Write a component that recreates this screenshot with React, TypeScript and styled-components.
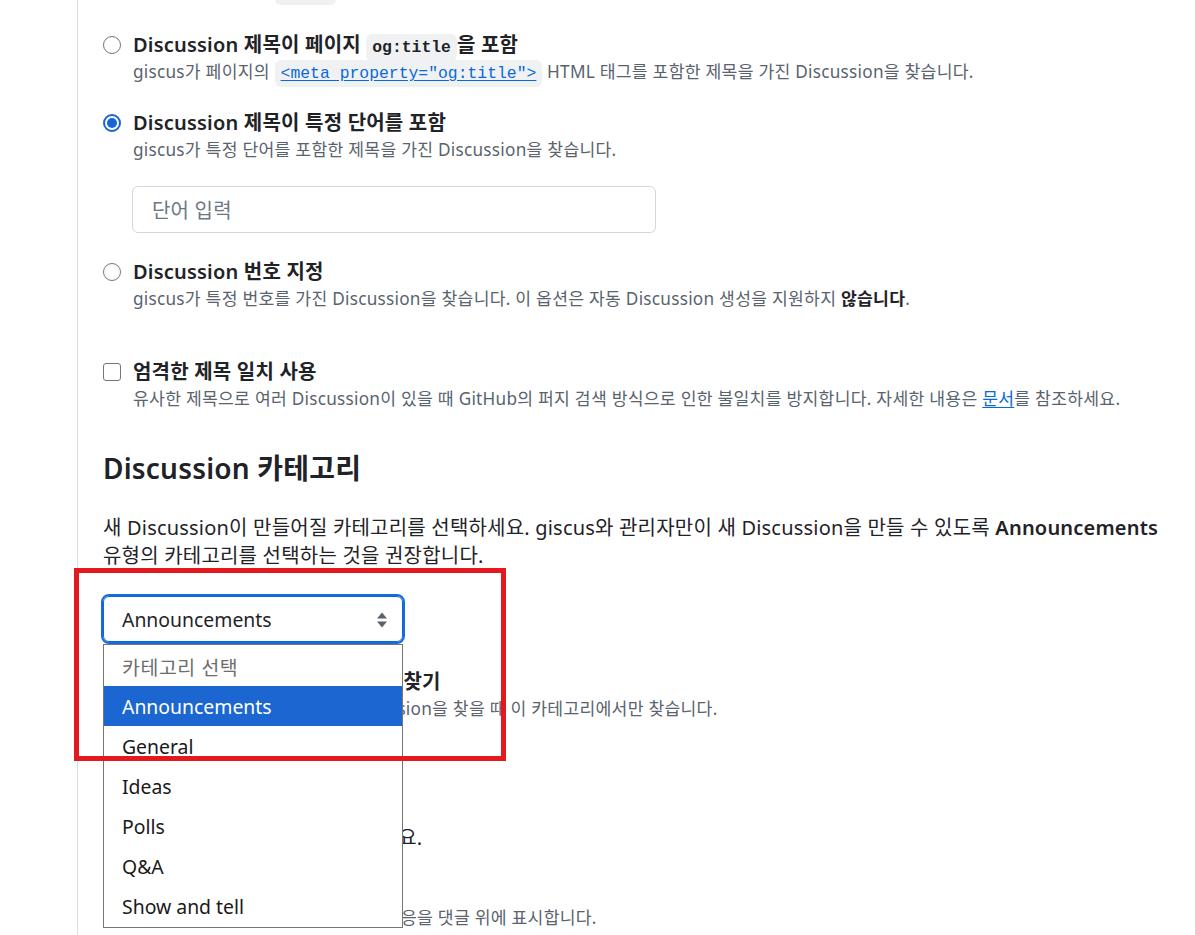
import React from 'react';
import styled, { createGlobalStyle } from 'styled-components';

const GlobalStyle = createGlobalStyle`
  html, body { margin: 0; padding: 0; background: #ffffff; }
  body {
    font-family: "Noto Sans", "Noto Sans CJK KR", sans-serif;
    color: #1f2328;
    overflow: hidden;
  }
`;

const Page = styled.div`
  height: 935px;
  overflow: hidden;
  padding-left: 77px;
`;

const Column = styled.main`
  border-left: 1px solid #d8dee4;
  min-height: 1100px;
  padding-left: 25px;
  margin-top: -50px;
`;

const OptionList = styled.div`
  display: flex;
  flex-direction: column;
  gap: 24px;
`;

const Option = styled.div<{ $mt?: number }>`
  display: grid;
  grid-template-columns: 18px 1fr;
  column-gap: 12px;
  margin-top: ${(p) => p.$mt ?? 0}px;
`;

const Radio = styled.span<{ $checked?: boolean }>`
  box-sizing: border-box;
  width: 18px;
  height: 18px;
  margin-top: 4px;
  border-radius: 50%;
  border: ${(p) => (p.$checked ? '2px solid #1766d6' : '1.5px solid #767676')};
  display: flex;
  align-items: center;
  justify-content: center;
  &::after {
    content: '';
    width: 10px;
    height: 10px;
    border-radius: 50%;
    background: ${(p) => (p.$checked ? '#1766d6' : 'transparent')};
  }
`;

const Checkbox = styled.span`
  box-sizing: border-box;
  width: 18px;
  height: 18px;
  margin-top: 4px;
  border-radius: 3px;
  border: 1.5px solid #767676;
`;

const Body = styled.div`
  display: flex;
  flex-direction: column;
`;

const Title = styled.div`
  font-size: 20px;
  font-weight: 600;
  line-height: 26px;
  letter-spacing: 0.2px;
  color: #1f2328;
  white-space: nowrap;
`;

const Desc = styled.div`
  font-size: 17.2px;
  line-height: 28px;
  letter-spacing: 0.25px;
  color: #59636e;
  white-space: nowrap;
  strong {
    font-weight: 700;
    color: #1f2328;
  }
`;

const Code = styled.code<{ $bold?: boolean }>`
  font-family: "Liberation Mono", "DejaVu Sans Mono", monospace;
  font-size: 16.4px;
  line-height: 1;
  letter-spacing: 0;
  font-weight: ${(p) => (p.$bold ? 700 : 400)};
  background: #eff1f3;
  border-radius: 6px;
  padding: 4px 6px;
  color: #1f2328;
`;

const Link = styled.a`
  color: #0969da;
  text-decoration: underline;
  text-underline-offset: 2px;
`;

const TextInput = styled.div`
  box-sizing: border-box;
  width: 524px;
  height: 47px;
  margin-top: 22px;
  margin-bottom: 2px;
  margin-left: -1px;
  border: 1px solid #d0d7de;
  border-radius: 6px;
  padding-left: 19px;
  display: flex;
  align-items: center;
  font-size: 20px;
  letter-spacing: 0.2px;
  color: #6e7781;
`;

const Heading = styled.h2`
  margin: 38px 0 0;
  font-size: 28px;
  line-height: 34px;
  font-weight: 600;
  letter-spacing: 0.2px;
  color: #1f2328;
`;

const Para = styled.p`
  margin: 29px 0 0;
  font-size: 20px;
  line-height: 28px;
  letter-spacing: 0.2px;
  color: #1f2328;
  white-space: nowrap;
  strong {
    font-weight: 600;
  }
`;

const SelectWrap = styled.div`
  position: relative;
  width: 300px;
  margin-top: 26px;
  margin-bottom: 27px;
  z-index: 2;
`;

const SelectBox = styled.div`
  box-sizing: border-box;
  width: 300px;
  height: 46px;
  border: 1px solid #0969da;
  border-radius: 6px;
  outline: 2px solid #1a6bd8;
  outline-offset: 0;
  padding: 1px 14px 0 18px;
  display: flex;
  align-items: center;
  justify-content: space-between;
  font-size: 19.4px;
  color: #1f2328;
  background: #fff;
`;

const ListBox = styled.ul`
  position: absolute;
  top: calc(100% + 2px);
  left: 0;
  box-sizing: border-box;
  width: 300px;
  margin: 0;
  padding: 1px 0;
  list-style: none;
  border: 1px solid #767676;
  background: #ffffff;
`;

const ListItem = styled.li<{ $active?: boolean; $muted?: boolean }>`
  height: 40px;
  display: flex;
  align-items: center;
  padding-left: 18px;
  padding-top: 1px;
  box-sizing: border-box;
  font-size: 19.4px;
  letter-spacing: ${(p) => (p.$muted ? '0.6px' : '0')};
  background: ${(p) => (p.$active ? '#1b66d1' : 'transparent')};
  color: ${(p) => (p.$active ? '#ffffff' : p.$muted ? '#6d6d6d' : '#1a1a1a')};
`;

const Annotation = styled.div`
  position: absolute;
  left: -29px;
  top: -28px;
  width: 432px;
  height: 193px;
  box-sizing: border-box;
  border: 5px solid #e3191d;
  z-index: 3;
  pointer-events: none;
`;

const SortIcon = () => (
  <svg width="12" height="18" viewBox="0 0 12 18" aria-hidden="true">
    <path d="M1 7.5 L6 1.5 L11 7.5 Z" fill="#59636e" />
    <path d="M1 10.5 L6 16.5 L11 10.5 Z" fill="#59636e" />
  </svg>
);

const categories = ['Announcements', 'General', 'Ideas', 'Polls', 'Q&A', 'Show and tell'];

export default function App() {
  return (
    <>
      <GlobalStyle />
      <Page>
        <Column>
          <OptionList>
            <Option>
              <Radio />
              <Body>
                <Title>Discussion 제목이 페이지 title을 포함</Title>
                <Desc>
                  giscus가 페이지의 <Code>title</Code> HTML 태그를 포함한 제목을 가진 Discussion을 찾습니다.
                </Desc>
              </Body>
            </Option>
            <Option $mt={4}>
              <Radio />
              <Body>
                <Title>
                  Discussion 제목이 페이지 <Code $bold>og:title</Code>을 포함
                </Title>
                <Desc>
                  giscus가 페이지의{' '}
                  <Code>
                    <Link href="#">{'<meta property="og:title">'}</Link>
                  </Code>{' '}
                  HTML 태그를 포함한 제목을 가진 Discussion을 찾습니다.
                </Desc>
              </Body>
            </Option>
            <Option>
              <Radio $checked />
              <Body>
                <Title>Discussion 제목이 특정 단어를 포함</Title>
                <Desc>giscus가 특정 단어를 포함한 제목을 가진 Discussion을 찾습니다.</Desc>
                <TextInput>단어 입력</TextInput>
              </Body>
            </Option>
            <Option>
              <Radio />
              <Body>
                <Title>Discussion 번호 지정</Title>
                <Desc>
                  giscus가 특정 번호를 가진 Discussion을 찾습니다. 이 옵션은 자동 Discussion 생성을 지원하지{' '}
                  <strong>않습니다</strong>.
                </Desc>
              </Body>
            </Option>
          </OptionList>

          <Option $mt={46}>
            <Checkbox />
            <Body>
              <Title>엄격한 제목 일치 사용</Title>
              <Desc>
                유사한 제목으로 여러 Discussion이 있을 때 GitHub의 퍼지 검색 방식으로 인한 불일치를 방지합니다. 자세한 내용은{' '}
                <Link href="#">문서</Link>를 참조하세요.
              </Desc>
            </Body>
          </Option>

          <Heading>Discussion 카테고리</Heading>
          <Para>
            새 Discussion이 만들어질 카테고리를 선택하세요. giscus와 관리자만이 새 Discussion을 만들 수 있도록{' '}
            <strong>Announcements</strong>
            <br />
            유형의 카테고리를 선택하는 것을 권장합니다.
          </Para>

          <SelectWrap>
            <Annotation />
            <SelectBox>
              <span>Announcements</span>
              <SortIcon />
            </SelectBox>
            <ListBox>
              <ListItem $muted>카테고리 선택</ListItem>
              {categories.map((c, i) => (
                <ListItem key={c} $active={i === 0}>
                  {c}
                </ListItem>
              ))}
            </ListBox>
          </SelectWrap>

          <Option>
            <Checkbox />
            <Body>
              <Title>이 카테고리에서만 Discussion 찾기</Title>
              <Desc>giscus가 페이지와 일치하는 Discussion을 찾을 때 이 카테고리에서만 찾습니다.</Desc>
            </Body>
          </Option>

          <Heading>기능</Heading>
          <Para>특정 기능들을 활성화할지 선택하세요.</Para>

          <Option $mt={26}>
            <Checkbox />
            <Body>
              <Title>메인 포스트에 반응 활성화</Title>
              <Desc>Discussion의 메인 포스트에 대한 반응을 댓글 위에 표시합니다.</Desc>
            </Body>
          </Option>
        </Column>
      </Page>
    </>
  );
}
